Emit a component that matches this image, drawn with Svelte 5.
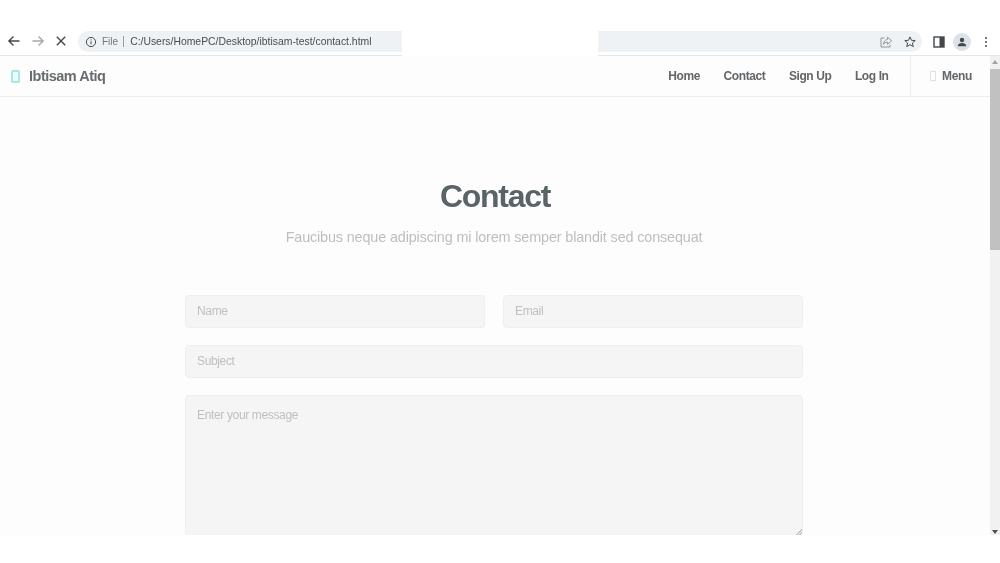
<script>
  const links = ['Home', 'Contact', 'Sign Up', 'Log In'];
</script>

<div class="window">
  <div class="topgap"></div>
  <div class="toolbar">
    <div class="navbtns">
      <svg class="ic" viewBox="0 0 14 14"><path d="M12.5 7H2M6.5 2.4 1.9 7l4.6 4.6" class="st dark"/></svg>
      <svg class="ic" viewBox="0 0 14 14"><path d="M1.5 7H12M7.5 2.4 12.1 7l-4.6 4.6" class="st faint"/></svg>
      <svg class="ic" viewBox="0 0 14 14"><path d="M2.8 2.8l8.4 8.4M11.2 2.8l-8.4 8.4" class="st dark"/></svg>
    </div>
    <div class="omni left">
      <svg class="info" viewBox="0 0 12 12"><circle cx="6" cy="6" r="4.6" class="st thin"/><path d="M6 5.4v3M6 3.4v1.1" class="st thin"/></svg>
      <span class="file">File</span>
      <span class="sep"></span>
      <span class="url">C:/Users/HomePC/Desktop/ibtisam-test/contact.html</span>
    </div>
    <div class="hole"></div>
    <div class="omni right">
      <svg class="tool" viewBox="0 0 14 14"><path d="M8.5 2.2 12.6 5.8 8.5 9.3V7.2C6.6 7.2 5.3 8 4.4 9.4 4.6 7 6 4.7 8.5 4.4ZM5.5 3H2v9h9V9.5" class="st light"/></svg>
      <svg class="tool" viewBox="0 0 14 14"><path d="M7 1.9 8.5 5.3l3.7.3-2.8 2.4.9 3.6L7 9.7 3.7 11.600l.9-3.600-2.800-2.400 3.700-.3Z" class="st dark thin"/></svg>
    </div>
    <div class="tools">
      <svg class="panel" viewBox="0 0 12 12"><rect x="1" y="1" width="10" height="10" class="st dark"/><rect x="6.500" y="1" width="4.500" height="10" class="fillDark"/></svg>
      <span class="avatar"><svg viewBox="0 0 12 12"><circle cx="6" cy="4" r="2.200" class="fillDark"/><path d="M1.800 10.200c0-2 2-3.200 4.200-3.200s4.200 1.200 4.200 3.200Z" class="fillDark"/></svg></span>
      <span class="kebab"><i></i><i></i><i></i></span>
    </div>
  </div>

  <div class="viewport">
    <div class="page">
      <header>
        <div class="brand"><span class="logo"></span><span>Ibtisam Atiq</span></div>
        <nav>
          {#each links as l}<a href="#top">{l}</a>{/each}
        </nav>
        <div class="menu"><span class="tofu"></span><span>Menu</span></div>
      </header>
      <main>
        <h1>Contact</h1>
        <p>Faucibus neque adipiscing mi lorem semper blandit sed consequat</p>
        <form>
          <div class="row">
            <input placeholder="Name" />
            <input placeholder="Email" />
          </div>
          <input class="full" placeholder="Subject" />
          <textarea placeholder="Enter your message"></textarea>
        </form>
      </main>
    </div>
    <div class="scrollbar">
      <span class="up"></span>
      <span class="thumb"></span>
      <span class="down"></span>
    </div>
  </div>
</div>

<style>
  :global(body) { margin: 0; background: #fff; }
  .window {
    width: 1000px; height: 563px; overflow: hidden; background: #fff;
    font-family: "Liberation Sans", Arial, sans-serif;
    display: flex; flex-direction: column; filter: blur(0.5px);
  }
  .topgap { height: 30px; }
  .toolbar {
    height: 25px; display: flex; align-items: stretch;
    border-bottom: 1px solid #e4e6e8; box-sizing: content-box;
  }
  .navbtns { width: 78px; box-sizing: border-box; padding: 0 10px 3px 7px; display: flex; justify-content: space-between; align-items: center; }
  .ic { width: 14px; height: 14px; }
  .st { fill: none; stroke-width: 1.400; }
  .dark { stroke: #45484b; }
  .faint { stroke: #a5a8aa; }
  .light { stroke: #8a8d90; stroke-width: 0.900; }
  .thin { stroke-width: 1; stroke: #4a4d50; }
  .fillDark { fill: #45484b; }
  .omni { background: #eff2f5; height: 21px; margin-top: 1px; display: flex; align-items: center; }
  .left { width: 324px; box-sizing: border-box; border-radius: 11px 0 0 11px; padding-left: 7px; }
  .hole { width: 196px; background: #fff; margin-bottom: -1px; position: relative; }
  .right { width: 324px; box-sizing: border-box; border-radius: 0 11px 11px 0; justify-content: flex-end; gap: 10px; padding-right: 5px; }
  .info { width: 12px; height: 12px; }
  .file { font-size: 10px; color: #74777a; margin-left: 5px; }
  .sep { width: 1px; height: 11px; background: #9a9da0; margin: 0 6px 0 5px; }
  .url { font-size: 10.400px; color: #4a4d50; white-space: nowrap; }
  .tool { width: 14px; height: 14px; }
  .tools { flex: 1; display: flex; align-items: center; padding-left: 11px; margin-top: 1px; height: 21px; }
  .panel { width: 12px; height: 12px; }
  .avatar { width: 18px; height: 18px; border-radius: 50%; background: #dde1ea; margin-left: 8px; display: flex; align-items: center; justify-content: center; }
  .avatar svg { width: 12px; height: 12px; }
  .kebab { margin-left: 14px; display: flex; flex-direction: column; gap: 2px; }
  .kebab i { width: 2px; height: 2px; border-radius: 50%; background: #45484b; display: block; }

  .viewport { height: 479px; display: flex; overflow: hidden; background: #fdfdfd; }
  .page { width: 990px; overflow: hidden; }
  header { height: 40px; border-bottom: 1px solid #eceded; display: flex; align-items: stretch; color: #5f6366; font-weight: 700; }
  .brand { flex: 1; display: flex; align-items: center; gap: 8px; padding-left: 11px; font-size: 14.500px; letter-spacing: -0.500px; color: #686c6f; }
  .logo { width: 5px; height: 9px; border: 2px solid #a9e6e6; border-radius: 2px; background: #eefafa; margin-right: 1px; }
  nav { display: flex; align-items: center; gap: 23.500px; padding-right: 21.500px; }
  nav a { font-size: 12px; letter-spacing: -0.400px; color: #636669; text-decoration: none; }
  .menu { width: 80px; box-sizing: border-box; border-left: 1px solid #eeeeee; display: flex; align-items: center; padding-left: 19px; gap: 6px; font-size: 12px; letter-spacing: -0.350px; color: #636669; }
  .tofu { width: 4px; height: 8px; border: 1px solid #e2e2e2; }
  main { display: flex; flex-direction: column; align-items: center; padding-right: 2px; }
  h1 { margin: 80px 0 0 2px; font-size: 32px; line-height: 38px; letter-spacing: -1.300px; font-weight: 700; color: #5a6468; }
  p { margin: 13px 0 0; font-size: 14.400px; line-height: 18px; letter-spacing: -0.140px; color: #bcbec0; }
  form { margin-top: 49px; width: 618px; display: flex; flex-direction: column; gap: 17px; }
  .row { display: flex; gap: 18px; }
  input, textarea {
    display: block; box-sizing: border-box; width: 100%; min-width: 0;
    background: #f5f5f5; border: 1px solid #efefef; border-radius: 4px; padding: 0 11px 1px;
    font: 12px "Liberation Sans", Arial, sans-serif; letter-spacing: -0.350px; color: #555; outline: none; margin: 0;
  }
  input { height: 33px; flex: 1; }
  input.full { flex: none; }
  textarea { height: 141px; flex: none; padding-top: 12px; resize: vertical; }
  textarea::-webkit-resizer { background: linear-gradient(135deg, transparent 78%, #c4c4c4 78%, #c4c4c4 84%, transparent 84%, transparent 90%, #c4c4c4 90%, #c4c4c4 96%, transparent 96%); }
  input::placeholder, textarea::placeholder { color: #bdbfc0; opacity: 1; }
  .scrollbar { width: 10px; background: #f1f1f1; display: flex; flex-direction: column; align-items: center; }
  .up { width: 0; height: 0; margin-top: 4px; border: 3px solid transparent; border-top: 0; border-bottom: 4px solid #a3a3a3; }
  .thumb { width: 10px; height: 181px; background: #c1c1c1; margin-top: 5px; }
  .down { width: 0; height: 0; margin-top: auto; margin-bottom: 1px; border: 3px solid transparent; border-bottom: 0; border-top: 4px solid #505050; }
</style>
